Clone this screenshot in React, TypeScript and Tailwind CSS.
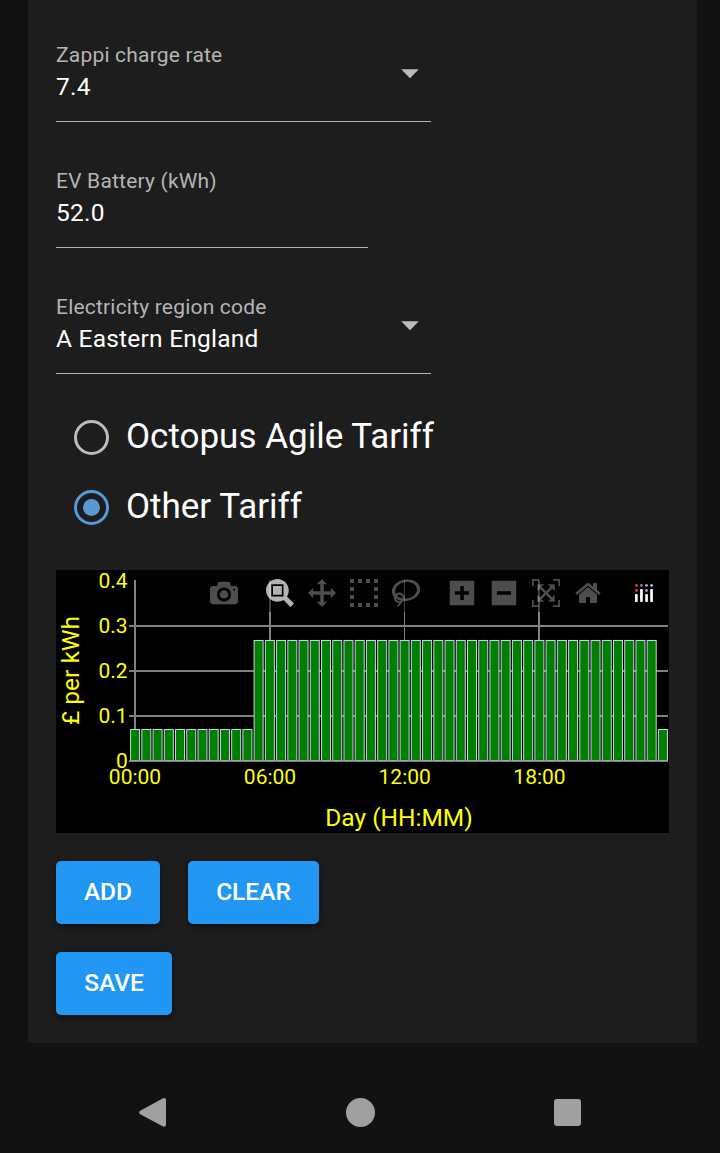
import type { ReactNode } from "react";

const GRID = "#808080";

const icons = {
  camera:
    "m500 450c-83 0-150-67-150-150 0-83 67-150 150-150 83 0 150 67 150 150 0 83-67 150-150 150z m400 150h-120c-16 0-34 13-39 29l-31 93c-6 15-23 28-40 28h-340c-16 0-34-13-39-28l-31-94c-6-15-23-28-40-28h-120c-55 0-100-45-100-100v-450c0-55 45-100 100-100h800c55 0 100 45 100 100v450c0 55-45 100-100 100z m-400-550c-138 0-250 112-250 250 0 138 112 250 250 250 138 0 250-112 250-250 0-138-112-250-250-250z m365 380c-19 0-35 16-35 35 0 19 16 35 35 35 19 0 35-16 35-35 0-19-16-35-35-35z",
  zoom: "m1000-25l-250 251c40 63 63 138 63 218 0 224-182 406-407 406-224 0-406-182-406-406s183-406 407-406c80 0 155 22 218 62l250-250 125 125z m-812 250l0 438 437 0 0-438-437 0z m62 375l313 0 0-312-313 0 0 312z",
  pan: "m1000 350l-187 188 0-125-250 0 0 250 125 0-188 187-187-187 125 0 0-250-250 0 0 125-188-188 186-187 0 125 252 0 0-250-125 0 187-188 188 188-125 0 0 250 250 0 0-126 187 188z",
  select:
    "M0 850h143v-143h-143z M286 850h143v-143h-143z M571 850h143v-143h-143z M857 850h143v-143h-143z M0 564h143v-143h-143z M857 564h143v-143h-143z M0 279h143v-143h-143z M857 279h143v-143h-143z M0 -7h143v-143h-143z M286 -7h143v-143h-143z M571 -7h143v-143h-143z M857 -7h143v-143h-143z",
  lasso:
    "m1018 538c-36 207-290 336-568 286-277-48-473-256-436-463 10-57 36-108 76-151-13-66 11-137 68-183 34-28 75-41 114-42l-55-70 0 0c-2-1-3-2-4-3-10-14-8-34 5-45 14-11 34-8 45 4 1 1 2 3 2 5l0 0 113 140c16 11 31 24 45 40 4 3 6 7 8 11 48-3 100 0 151 9 278 48 473 255 436 462z m-624-379c-80 14-149 48-197 96 42 42 109 47 156 9 33-26 47-66 41-105z m-187-74c-19 16-33 37-39 60 50-32 109-55 174-68-42-25-95-24-135 8z m360 75c-34-7-69-9-102-8 8 62-16 128-68 170-73 59-175 54-244-5-9 20-16 40-20 61-28 159 121 317 333 354s407-60 434-217c28-159-121-318-333-355z",
  plus: "m1 787l0-875 875 0 0 875-875 0z m687-500l-187 0 0-187-125 0 0 187-188 0 0 125 188 0 0 187 125 0 0-187 187 0 0-125z",
  minus: "m0 788l0-876 875 0 0 876-875 0z m688-500l-500 0 0 125 500 0 0-125z",
  autoscale:
    "m250 850l-187 0-63 0 0-62 0-188 63 0 0 188 187 0 0 62z m688 0l-188 0 0-62 188 0 0-188 62 0 0 188 0 62-62 0z m-875-938l0 188-63 0 0-188 0-62 63 0 187 0 0 62-187 0z m875 188l0-188-188 0 0-62 188 0 62 0 0 62 0 188-62 0z m-125 188l-1 0-93-94-156 156 156 156 92-93 2 0 0 250-250 0 0-2 93-92-156-156-156 156 94 92 0 2-250 0 0-250 0 0 93 93 157-156-157-156-93 94 0 0 0-250 250 0 0 0-94 93 156 157 156-157-93-93 0 0 250 0 0 250z",
  home: "m786 296v-267q0-15-11-26t-25-10h-214v214h-143v-214h-214q-15 0-25 10t-11 26v267q0 1 0 2t0 2l321 264 321-264q1-1 1-4z m124 39l-34-41q-5-5-12-6h-2q-7 0-12 3l-386 322-386-322q-7-4-13-4-7 2-12 7l-35 41q-4 5-3 13t6 12l401 334q18 15 42 15t43-15l136-114v109q0 8 5 13t13 5h107q8 0 13-5t5-13v-227l122-102q5-5 6-12t-4-13z",
};

const toolbar: { icon: keyof typeof icons; x: number; active?: boolean }[] = [
  { icon: "camera", x: 154 },
  { icon: "zoom", x: 210, active: true },
  { icon: "pan", x: 252 },
  { icon: "select", x: 294 },
  { icon: "lasso", x: 335.6 },
  { icon: "plus", x: 393.7 },
  { icon: "minus", x: 435.7 },
  { icon: "autoscale", x: 476 },
  { icon: "home", x: 519 },
];

const PITCH = 11.23;
const bars = Array.from({ length: 48 }, (_, i) => ({
  x: 79.1 + i * PITCH,
  top: i < 11 || i === 47 ? 159.5 : 70.5,
}));

function Chart() {
  return (
    <svg
      width="613"
      height="263"
      viewBox="0 0 613 263"
      className="block bg-black"
      fontFamily="Roboto, sans-serif"
      fill="#ffff00"
    >
      <g fill={GRID}>
        <rect x="213" y="10" width="2" height="181" />
        <rect x="348" y="10" width="1" height="181" />
        <rect x="482" y="10" width="2" height="181" />
        <rect x="73" y="55" width="539" height="2" />
        <rect x="73" y="100" width="539" height="2" />
        <rect x="73" y="145" width="539" height="2" />
        <rect x="73" y="190" width="539" height="2" />
        <rect x="78" y="10" width="2" height="181" />
      </g>
      <g fill="#008000" stroke="#c8d4e3" strokeWidth="1">
        {bars.map((b) => (
          <rect key={b.x} x={b.x - 4.5} y={b.top} width="9" height={190.5 - b.top} />
        ))}
      </g>
      <rect x="73" y="190" width="539" height="2" fill={GRID} fillOpacity="0.6" />
      <g fontSize="21" textAnchor="end">
        <text x="71.7" y="18">0.4</text>
        <text x="71.7" y="63">0.3</text>
        <text x="71.7" y="108">0.2</text>
        <text x="71.7" y="153">0.1</text>
        <text x="71.7" y="198">0</text>
      </g>
      <g fontSize="21" textAnchor="middle">
        <text x="79" y="214">00:00</text>
        <text x="214" y="214">06:00</text>
        <text x="348.7" y="214">12:00</text>
        <text x="483.5" y="214">18:00</text>
      </g>
      <text x="343" y="256" fontSize="24.5" textAnchor="middle">Day (HH:MM)</text>
      <text transform="translate(23 100.5) rotate(-90)" fontSize="24.5" textAnchor="middle">
        £ per kWh
      </text>
      <rect x="147" y="4" width="460" height="38" fill="#000" fillOpacity="0.5" />
      {toolbar.map((t) => (
        <path
          key={t.icon}
          d={icons[t.icon]}
          transform={`translate(${t.x} 9) scale(0.028) matrix(1 0 0 -1 0 850)`}
          fill="#fff"
          fillOpacity={t.active ? 0.7 : 0.3}
        />
      ))}
      <g fill="#fff">
        <rect x="579" y="24" width="2.7" height="8" rx="0.8" />
        <rect x="584.1" y="19" width="2.7" height="13" rx="0.8" />
        <rect x="589.2" y="24" width="2.7" height="8" rx="0.8" />
        <rect x="594.2" y="19" width="2.7" height="13" rx="0.8" />
        <circle cx="580.4" cy="15.4" r="1.4" fill="#ff2c6d" />
        <circle cx="580.4" cy="20.5" r="1.4" fill="#ff2c6d" />
        <circle cx="585.5" cy="15.4" r="1.4" fill="#d8619f" />
        <circle cx="590.5" cy="15.4" r="1.4" fill="#b6a0cf" />
        <circle cx="590.5" cy="20.5" r="1.4" fill="#b6a0cf" />
        <circle cx="595.6" cy="15.4" r="1.4" fill="#80e0ee" />
      </g>
    </svg>
  );
}

function Field({ label, value, select }: { label: string; value: string; select?: boolean }) {
  return (
    <div
      className={`flex h-[98px] justify-between border-b border-[#b2b2b2] ${select ? "w-[375px]" : "w-[312px]"}`}
    >
      <div className="flex flex-col pt-[15px]">
        <span className="h-8 text-[21px] leading-8 tracking-[0.197px] text-[#b4b4b4]">{label}</span>
        <span className="h-8 text-[24.5px] leading-8 tracking-[0.23px] text-white">{value}</span>
      </div>
      {select && (
        <svg width="18" height="10" viewBox="0 0 18 10" className="mt-[45px] mr-3">
          <path d="M0.2 0.3H17.8L9 9.3Z" fill="#bbb" />
        </svg>
      )}
    </div>
  );
}

function Radio({ label, checked }: { label: string; checked?: boolean }) {
  return (
    <div className="flex h-[70px] items-center gap-[17px] pl-[18px]">
      <span
        className={`flex size-[35px] items-center justify-center rounded-full border-3 ${checked ? "border-[#5898d4]" : "border-[#bbb]"}`}
      >
        {checked && <span className="size-[17px] rounded-full bg-[#5898d4]" />}
      </span>
      <span className="text-[35px] leading-[52px] text-white">{label}</span>
    </div>
  );
}

function Button({ className, children }: { className: string; children: ReactNode }) {
  return (
    <button
      className={`flex h-[63px] items-center justify-center rounded-[5px] bg-[#2196f3] text-[24.5px] leading-none font-medium text-white shadow-[0_2px_8px_rgba(0,0,0,0.3),0_3px_3px_rgba(0,0,0,0.2)] ${className}`}
    >
      {children}
    </button>
  );
}

export default function App() {
  return (
    <div className="flex h-[1153px] w-[720px] flex-col overflow-hidden bg-[#121212] font-['Roboto',sans-serif]">
      <main className="ml-7 flex h-[1043px] w-[669px] flex-col bg-[#1d1d1d] px-7 pt-6">
        <div className="flex flex-col gap-7">
          <Field label="Zappi charge rate" value="7.4" select />
          <Field label="EV Battery (kWh)" value="52.0" />
          <Field label="Electricity region code" value="A Eastern England" select />
        </div>
        <div className="mt-7 flex flex-col">
          <Radio label="Octopus Agile Tariff" />
          <Radio label="Other Tariff" checked />
        </div>
        <div className="mt-7 h-[263px]">
          <Chart />
        </div>
        <div className="mt-7 flex gap-7">
          <Button className="w-[104px]">ADD</Button>
          <Button className="w-[131px]">CLEAR</Button>
        </div>
        <div className="mt-7 flex">
          <Button className="w-[116px]">SAVE</Button>
        </div>
      </main>
      <nav className="flex h-[110px] items-center justify-between pt-7 pr-[139px] pl-[139px]">
        <svg width="27" height="30" viewBox="0 0 27 30">
          <path d="M2.2 15.4L25 3V27.8Z" fill="#a0a0a0" stroke="#a0a0a0" strokeWidth="4" strokeLinejoin="round" />
        </svg>
        <span className="size-[29px] rounded-full bg-[#a0a0a0]" />
        <span className="size-[27px] rounded-[3px] bg-[#a0a0a0]" />
      </nav>
    </div>
  );
}
